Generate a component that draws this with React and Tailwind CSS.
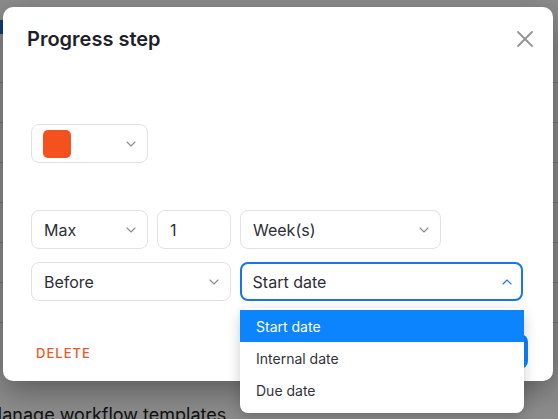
import { ChevronDown, ChevronUp, X } from "lucide-react";

function Chevron({ up = false, className = "" }) {
  const Icon = up ? ChevronUp : ChevronDown;
  return <Icon size={16} strokeWidth={1.6} className={className} />;
}

function Select({ value, className = "", children }) {
  return (
    <div
      className={`flex h-[39px] items-center justify-between rounded-lg border border-[#e2e2e2] bg-white pl-3 pr-[8px] text-[16px] text-[#2e2e38] ${className}`}
    >
      {children ?? <span>{value}</span>}
      <Chevron className="text-[#8a8a8a]" />
    </div>
  );
}

export default function App() {
  const lines = [82, 122, 162, 202, 242, 282, 322];

  return (
    <div
      className="relative h-[419px] w-[558px] overflow-hidden bg-white"
      style={{ fontFamily: "Inter, 'Noto Sans', sans-serif" }}
    >
      {/* page behind the modal */}
      <div className="absolute left-0 top-[20px] h-[14px] w-[4px] bg-[#1a73e8]" />
      {lines.map((y) => (
        <div
          key={y}
          className="absolute left-0 right-0 h-px bg-[#d8d8d8]"
          style={{ top: y }}
        />
      ))}
      <div className="absolute left-[-14px] top-[404px] text-[18px] leading-[22px] text-[#222]">
        Manage workflow templates
      </div>

      {/* backdrop */}
      <div className="absolute inset-0 bg-black/45" />

      {/* modal */}
      <div className="absolute left-[3px] top-[7px] flex h-[374px] w-[550px] flex-col rounded-[10px] bg-white shadow-[0_10px_30px_rgba(0,0,0,0.35)]">
        <div className="flex items-start justify-between pl-6 pr-[14px] pt-[18px]">
          <h2 className="text-[20px] font-semibold leading-[28px] text-[#1f1f2b]">
            Progress step
          </h2>
          <X size={28} strokeWidth={1.6} className="text-[#959595]" />
        </div>

        <div className="flex flex-col pl-7 pr-[30px]">
          <Select className="mt-[71px] w-[117px] pl-[11px]">
            <div className="h-[28px] w-[28px] rounded-[5px] bg-[#f4511e]" />
          </Select>

          <div className="mt-[47px] flex gap-[9px]">
            <Select value="Max" className="w-[117px]" />
            <div className="flex h-[39px] w-[74px] items-center rounded-lg border border-[#e2e2e2] px-3 text-[16px] text-[#2e2e38]">
              1
            </div>
            <Select value="Week(s)" className="w-[201px]" />
          </div>

          <div className="mt-[13px] flex gap-[9px]">
            <Select value="Before" className="w-[200px]" />
            <div className="flex h-[39px] w-[284px] items-center justify-between rounded-lg border-2 border-[#1a73e8] pl-[11px] pr-[6px] text-[16px] text-[#2e2e38]">
              <span>Start date</span>
              <Chevron up className="text-[#1a73e8]" />
            </div>
          </div>

          <div className="mt-[37px] flex items-center justify-between">
            <span className="pl-[5px] text-[13px] font-medium tracking-[0.08em] text-[#e8572b]">
              DELETE
            </span>
            <button className="mr-[-5px] mt-[-4px] h-[35px] w-[84px] rounded-lg bg-[#0b84fd] text-[13px] font-medium tracking-wide text-white">
              SAVE
            </button>
          </div>
        </div>
      </div>

      {/* open dropdown menu */}
      <div className="absolute left-[240px] top-[308px] w-[284px] rounded-lg bg-white pb-[7px] pt-[2px] text-[14px] text-[#33333d] shadow-[0_4px_14px_rgba(0,0,0,0.2)]">
        <div className="flex h-[32px] items-center bg-[#0b84fd] px-4 text-white">
          Start date
        </div>
        <div className="flex h-[32px] items-center px-4">Internal date</div>
        <div className="flex h-[32px] items-center px-4">Due date</div>
      </div>
    </div>
  );
}
